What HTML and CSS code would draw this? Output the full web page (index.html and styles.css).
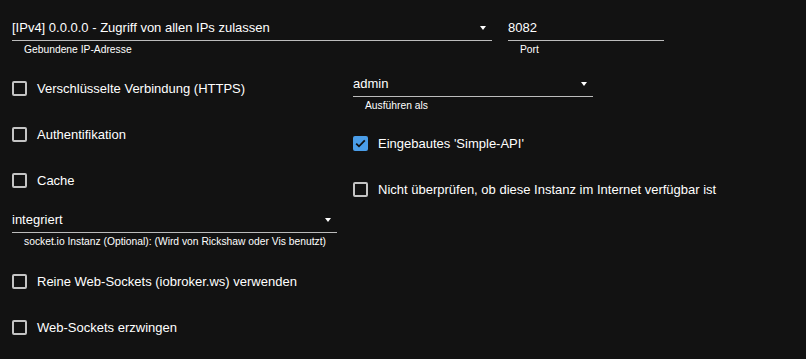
FILE: index.html
```html
<!DOCTYPE html>
<html lang="de">
<head>
  <meta charset="UTF-8">
  <title>Web-Einstellungen</title>
  <link rel="stylesheet" href="styles.css">
</head>
<body>
  <div class="page">
    <!-- IP und Port -->
    <div class="top-row">
      <div class="field field-ip">
        <div class="select">
          <span class="value">[IPv4] 0.0.0.0 - Zugriff von allen IPs zulassen</span>
          <span class="arrow"></span>
        </div>
        <div class="helper">Gebundene IP-Adresse</div>
      </div>
      <div class="field field-port">
        <div class="select">
          <span class="value">8082</span>
        </div>
        <div class="helper">Port</div>
      </div>
    </div>

    <div class="columns">
      <!-- linke Spalte -->
      <div class="col col-left">
        <label class="check"><span class="box"></span>Verschlüsselte Verbindung (HTTPS)</label>
        <label class="check"><span class="box"></span>Authentifikation</label>
        <label class="check"><span class="box"></span>Cache</label>
        <div class="field field-socket">
          <div class="select">
            <span class="value">integriert</span>
            <span class="arrow"></span>
          </div>
          <div class="helper">socket.io Instanz (Optional): (Wird von Rickshaw oder Vis benutzt)</div>
        </div>
        <label class="check"><span class="box"></span>Reine Web-Sockets (iobroker.ws) verwenden</label>
        <label class="check"><span class="box"></span>Web-Sockets erzwingen</label>
      </div>

      <!-- rechte Spalte -->
      <div class="col col-right">
        <div class="field field-user">
          <div class="select">
            <span class="value">admin</span>
            <span class="arrow"></span>
          </div>
          <div class="helper">Ausführen als</div>
        </div>
        <label class="check check-api">
          <span class="box checked">
            <svg width="11" height="9" viewBox="0 0 11 9"><path d="M1.2 4.6 L4 7.3 L9.8 1.4" fill="none" stroke="#111" stroke-width="1.8"/></svg>
          </span>Eingebautes 'Simple-API'
        </label>
        <label class="check"><span class="box"></span>Nicht überprüfen, ob diese Instanz im Internet verfügbar ist</label>
      </div>
    </div>
  </div>
</body>
</html>
```

FILE: styles.css
```css
/* Grundlayout */
body {
  margin: 0;
  background-color: #121212;
  color: #ffffff;
  font-family: "Liberation Sans", Arial, Helvetica, sans-serif;
  font-size: 13px;
}
.page {
  padding: 18px 12px 0 12px;
}
.top-row {
  display: flex;
  gap: 16px;
}
.field-ip {
  width: 480px;
}
.field-port {
  width: 156px;
}
.columns {
  display: flex;
  gap: 16px;
  margin-top: 8px;
}
.col {
  display: flex;
  flex-direction: column;
}
.col-left {
  width: 325px;
}
.col-right {
  flex: 1;
}
.field-user {
  width: 240px;
}

/* Auswahlfelder */
.select {
  display: flex;
  align-items: center;
  justify-content: space-between;
  font-size: 13px;
  line-height: 20px;
  padding-bottom: 2px;
  border-bottom: 1px solid #bcbcbc;
}
.arrow {
  width: 0;
  height: 0;
  margin-right: 6px;
  border-left: 3.5px solid transparent;
  border-right: 3.5px solid transparent;
  border-top: 4px solid #ffffff;
}
.helper {
  font-size: 10.3px;
  line-height: 14px;
  margin-top: 2px;
  padding-left: 12px;
}
.field-socket {
  margin: 7px 0 9px 0;
}
.field-user {
  margin-top: 9px;
}

/* Checkboxen */
.check {
  display: flex;
  align-items: center;
  gap: 10px;
  height: 46px;
}
.check-api {
  margin-top: 7px;
}
.box {
  width: 15px;
  height: 15px;
  flex: none;
  box-sizing: border-box;
  border: 2px solid #c4c4c4;
  border-radius: 2px;
  display: flex;
  align-items: center;
  justify-content: center;
}
.box.checked {
  background-color: #4a9de8;
  border-color: #4a9de8;
}
```
